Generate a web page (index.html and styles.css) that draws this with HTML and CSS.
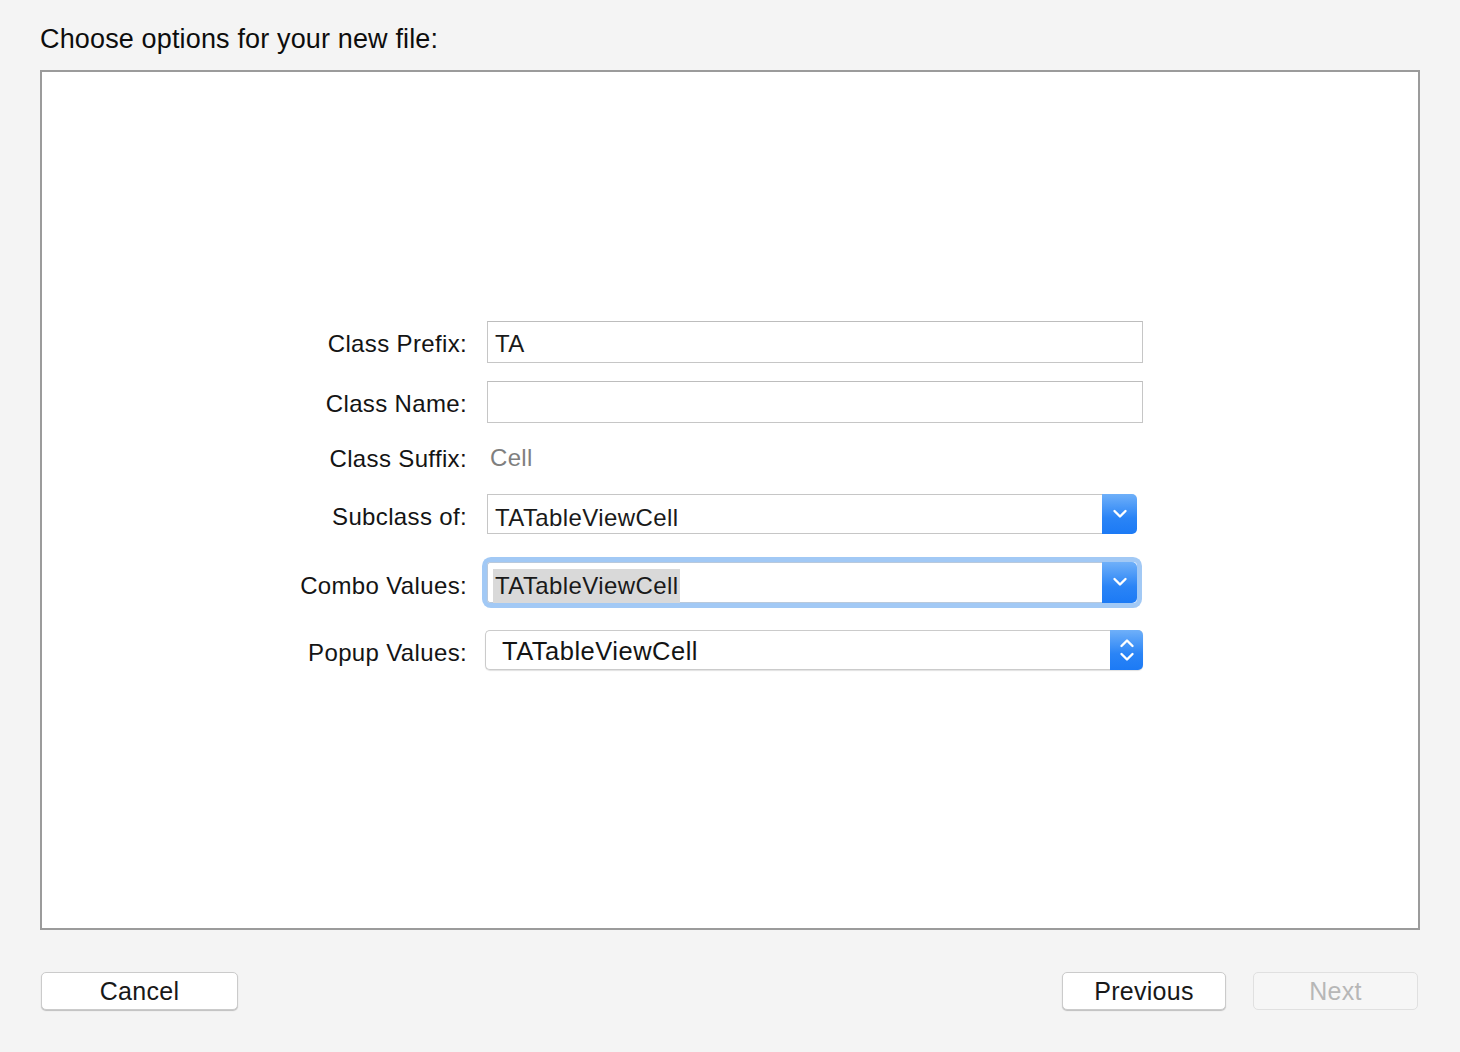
FILE: index.html
```html
<!DOCTYPE html>
<html lang="en">
<head>
<meta charset="utf-8">
<title>Choose options</title>
<link rel="stylesheet" href="styles.css">
</head>
<body>
<div class="title">Choose options for your new file:</div>
<div class="panel">
  <div class="form">
    <div class="row r1">
      <div class="label">Class Prefix:</div>
      <div class="textfield">TA</div>
    </div>
    <div class="row r2">
      <div class="label">Class Name:</div>
      <div class="textfield"></div>
    </div>
    <div class="row r3">
      <div class="label">Class Suffix:</div>
      <div class="static">Cell</div>
    </div>
    <div class="row r4">
      <div class="label">Subclass of:</div>
      <div class="combo">
        <div class="combo-text">TATableViewCell</div>
        <div class="combo-btn">
          <svg width="16" height="10" viewBox="0 0 16 10"><path d="M2.5 2 L8 7.5 L13.5 2" fill="none" stroke="#fff" stroke-width="2.4" stroke-linecap="round" stroke-linejoin="round"/></svg>
        </div>
      </div>
    </div>
    <div class="row r5">
      <div class="label">Combo Values:</div>
      <div class="combo focused">
        <div class="combo-text"><span class="sel">TATableViewCell</span></div>
        <div class="combo-btn">
          <svg width="16" height="10" viewBox="0 0 16 10"><path d="M2.5 2 L8 7.5 L13.5 2" fill="none" stroke="#fff" stroke-width="2.4" stroke-linecap="round" stroke-linejoin="round"/></svg>
        </div>
      </div>
    </div>
    <div class="row r6">
      <div class="label">Popup Values:</div>
      <div class="popup">
        <div class="popup-text">TATableViewCell</div>
        <div class="popup-btn">
          <svg width="18" height="28" viewBox="0 0 18 28"><path d="M3.5 10 L9 4.5 L14.5 10" fill="none" stroke="#fff" stroke-width="2.4" stroke-linecap="round" stroke-linejoin="round"/><path d="M3.5 18 L9 23.5 L14.5 18" fill="none" stroke="#fff" stroke-width="2.4" stroke-linecap="round" stroke-linejoin="round"/></svg>
        </div>
      </div>
    </div>
  </div>
</div>
<div class="buttons">
  <div class="btn cancel">Cancel</div>
  <div class="btn previous">Previous</div>
  <div class="btn next disabled">Next</div>
</div>
</body>
</html>
```
FILE: styles.css
```css
html, body {
  margin: 0;
  padding: 0;
}
body {
  width: 1460px;
  height: 1052px;
  background: #f4f4f4;
  font-family: "Liberation Sans", Arial, sans-serif;
  color: #1c1c1c;
  overflow: hidden;
}
.title {
  box-sizing: border-box;
  height: 70px;
  padding: 23px 0 0 40px;
  font-size: 27px;
  line-height: 32px;
  letter-spacing: 0.15px;
  color: #0d0d0d;
}
.panel {
  box-sizing: border-box;
  margin-left: 40px;
  width: 1380px;
  height: 860px;
  border: 2px solid #9b9b9b;
  background: #fff;
}
.form {
  display: flex;
  flex-direction: column;
  padding-top: 249px;
}
.row {
  display: grid;
  grid-template-columns: 425px 656px;
  column-gap: 20px;
  align-items: center;
}
.r2 { margin-top: 18px; }
.r3 { margin-top: 13px; height: 42px; }
.r4 { margin-top: 16px; }
.r5 { margin-top: 28px; }
.r6 { margin-top: 27px; }
.label {
  text-align: right;
  font-size: 24px;
  letter-spacing: 0.35px;
  color: #141414;
  line-height: 30px;
  padding-top: 3px;
}
.r4 .label, .r5 .label, .r6 .label { padding-top: 6px; }
.textfield {
  box-sizing: border-box;
  height: 42px;
  border: 1px solid #c6c6c6;
  border-top-color: #bdbdbd;
  padding-left: 7px;
  font-size: 24px;
  line-height: 43px;
  letter-spacing: 0.3px;
  color: #1a1a1a;
}
.static {
  padding: 2px 0 0 3px;
  font-size: 24px;
  letter-spacing: 0.3px;
  color: #7f7f7f;
  line-height: 30px;
}
.combo {
  box-sizing: border-box;
  width: 650px;
  height: 40px;
  display: flex;
  border-radius: 0 5px 5px 0;
}
.combo-text {
  flex: 1;
  box-sizing: border-box;
  border: 1px solid #c6c6c6;
  border-right: none;
  padding-left: 7px;
  font-size: 24px;
  letter-spacing: 0.4px;
  line-height: 45px;
  color: #1a1a1a;
  white-space: nowrap;
}
.combo-btn {
  width: 35px;
  height: 40px;
  border-radius: 0 5px 5px 0;
  background: linear-gradient(#6fb0f9, #2a84f6 60%, #1c7af5);
  display: flex;
  align-items: center;
  justify-content: center;
}
.combo-btn svg { margin-top: -1px; }
.focused {
  height: 41px;
  box-shadow: 0 0 0 5px #a2c9f5;
  border-radius: 4px;
}
.focused .combo-text {
  height: 41px;
  line-height: 41px;
  padding-left: 5px;
  border-color: #b9c9dc;
  border-radius: 3px 0 0 3px;
}
.focused .combo-btn { height: 41px; }
.sel {
  display: inline-block;
  background: #d9d9d9;
  padding: 0 2px;
  line-height: 34px;
  vertical-align: -2px;
}
.popup {
  box-sizing: border-box;
  margin-left: -2px;
  width: 658px;
  height: 40px;
  display: flex;
  border-radius: 5px;
  border: 1px solid #cbcbcb;
  border-right: none;
  box-shadow: 0 1px 1px rgba(0, 0, 0, 0.12);
  background: #fff;
}
.popup-text {
  flex: 1;
  padding-left: 16px;
  font-size: 25.5px;
  letter-spacing: 0.5px;
  line-height: 41px;
  color: #141414;
}
.popup-btn {
  width: 33px;
  height: 40px;
  margin-top: -1px;
  border-radius: 0 5px 5px 0;
  background: linear-gradient(#6fb0f9, #2a84f6 60%, #1c7af5);
  display: flex;
  align-items: center;
  justify-content: center;
}
.buttons {
  display: flex;
  margin-top: 42px;
  padding: 0 42px 0 41px;
}
.btn {
  box-sizing: border-box;
  height: 38px;
  border: 1px solid #cbcbcb;
  border-radius: 5px;
  background: #fff;
  box-shadow: 0 1px 1px rgba(0, 0, 0, 0.22);
  font-size: 25px;
  letter-spacing: 0.3px;
  line-height: 37px;
  text-align: center;
  color: #181818;
}
.cancel { width: 197px; }
.previous { width: 164px; margin-left: auto; }
.next { width: 165px; margin-left: 27px; }
.disabled {
  background: #f6f6f6;
  border-color: #e0e0e0;
  box-shadow: none;
  color: #b7b7b7;
}
```
